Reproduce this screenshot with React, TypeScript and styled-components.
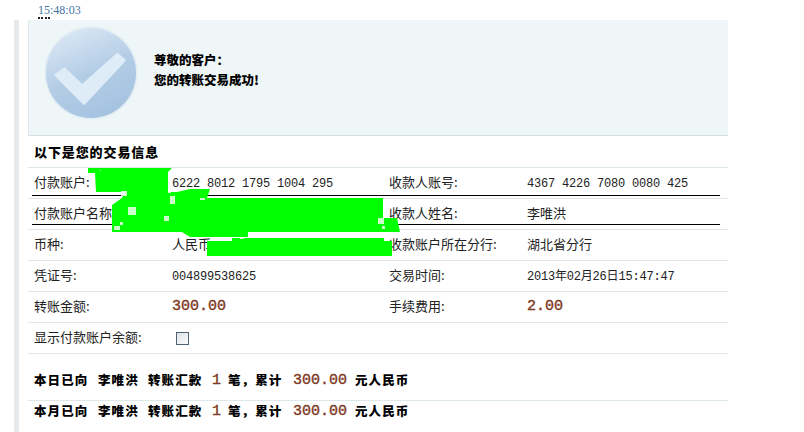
import React from "react";
import styled, { createGlobalStyle } from "styled-components";

const Global = createGlobalStyle`
  html, body { margin: 0; padding: 0; background: #fff; }
  body { font-family: "Noto Sans CJK SC", sans-serif; color: #111; }
  #root { width: 804px; height: 432px; overflow: hidden; }
`;

const Page = styled.div`
  position: relative;
  width: 804px;
  height: 432px;
  overflow: hidden;
  background: #fff;
`;

const TimeLine = styled.div`
  height: 20px;
  padding: 3px 0 0 38px;
  box-sizing: border-box;
  font: 12px/14px "Liberation Serif", serif;
  color: #44759f;
`;

const Dotted = styled.span`
  border-bottom: 2px dotted #222;
`;

const Frame = styled.div`
  margin-left: 14px;
  padding-left: 9px;
  border-left: 5px solid #e6eaec;
  height: 412px;
  width: 700px;
  display: flex;
  flex-direction: column;
`;

const Banner = styled.div`
  height: 116px;
  flex: none;
  box-sizing: border-box;
  background: #eff6f7;
  border-left: 1px solid #dfe8ea;
  border-bottom: 1px solid #d6e0e2;
  display: flex;
  align-items: center;
  padding-left: 15px;
  gap: 16px;
`;

const BadgeIcon = styled.svg`
  flex: none;
  width: 94px;
  height: 94px;
  margin-bottom: 9px;
`;

const Message = styled.div`
  font-size: 12.5px;
  line-height: 20px;
  font-weight: 900;
  color: #000;
  margin-bottom: 16px;
`;

const Title = styled.div`
  height: 32px;
  box-sizing: border-box;
  flex: none;
  padding: 5px 0 0 6px;
  font-size: 13px;
  line-height: 21px;
  font-weight: 900;
  letter-spacing: 0.9px;
  color: #000;
  border-bottom: 1px solid #dfe8e8;
`;

const Row = styled.div`
  height: 31px;
  flex: none;
  box-sizing: border-box;
  padding: 0 0 4px 6px;
  display: grid;
  grid-template-columns: 138px 217px 138px 1fr;
  align-items: center;
  border-bottom: 1px solid #dfe8e8;
`;

const Label = styled.div`
  font-size: 13px;
  color: #222;
  white-space: nowrap;
`;

const Value = styled.div`
  font-size: 13px;
  color: #222;
  white-space: nowrap;
`;

const Mono = styled.span`
  font-family: "Liberation Mono", "Noto Sans CJK SC", monospace;
  font-size: 12px;
  letter-spacing: -0.2px;
  color: #222;
`;

const Amount = styled.span`
  font-family: "Liberation Mono", monospace;
  font-size: 15px;
  font-weight: 400;
  letter-spacing: 0;
  color: #7e3a24;
  -webkit-text-stroke: 0.4px #7e3a24;
`;

const Check = styled.span`
  display: block;
  width: 11px;
  height: 11px;
  margin: 4px 0 0 4px;
  border: 1px solid #4f6478;
  background: linear-gradient(135deg, #dfe3e8, #fbfbfb);
`;

const Summary = styled.div<{ $h: number; $shift: number; $line?: boolean }>`
  height: ${(p) => p.$h}px;
  flex: none;
  box-sizing: border-box;
  padding: ${(p) => (p.$shift > 0 ? p.$shift : 0)}px 0 ${(p) => (p.$shift < 0 ? -p.$shift : 0)}px 6px;
  display: flex;
  align-items: center;
  font-size: 12.5px;
  font-weight: 900;
  color: #000;
  white-space: nowrap;
  border-bottom: ${(p) => (p.$line ? "1px solid #dfe8e8" : "none")};
`;

const Chunk = styled.span<{ $w: number }>`
  display: inline-block;
  flex: none;
  width: ${(p) => p.$w}px;
  letter-spacing: 1.1px;
`;

const Overlay = styled.svg`
  position: absolute;
  left: 0;
  top: 0;
  pointer-events: none;
`;

const Badge = () => (
  <BadgeIcon viewBox="0 0 96 96">
    <defs>
      <linearGradient id="disc" x1="0.25" y1="0" x2="0.7" y2="1">
        <stop offset="0" stopColor="#dbe8f5" />
        <stop offset="0.5" stopColor="#b4cde6" />
        <stop offset="1" stopColor="#a3c2e0" />
      </linearGradient>
    </defs>
    <circle cx="48" cy="48" r="47.5" fill="#e2ecf3" />
    <circle cx="48" cy="48" r="46" fill="url(#disc)" />
    <polygon
      points="12,50 21,44 39,61 75,29 82,35 41,79"
      fill="#deecf8"
      stroke="#deecf8"
      strokeWidth="3"
      strokeLinejoin="round"
    />
  </BadgeIcon>
);

const TotalLine = ({ period }: { period: string }) => (
  <>
    <Chunk $w={64}>{period}已向</Chunk>
    <Chunk $w={50}>李唯洪</Chunk>
    <Chunk $w={64}>转账汇款</Chunk>
    <Chunk $w={16}><Amount>1</Amount></Chunk>
    <Chunk $w={65}>笔，累计</Chunk>
    <Chunk $w={62}><Amount>300.00</Amount></Chunk>
    <Chunk $w={70}>元人民币</Chunk>
  </>
);

const specks = [
  [128, 207, 8, 8], [114, 226, 6, 4], [120, 222, 3, 3], [170, 196, 5, 8], [164, 216, 5, 5],
  [378, 218, 6, 6], [382, 226, 3, 3], [121, 191, 6, 5], [172, 232, 6, 5], [168, 190, 3, 3],
  [200, 198, 5, 2], [240, 237, 4, 2], [100, 170, 1, 1],
];

export default function App() {
  return (
    <Page>
      <Global />
      <TimeLine><Dotted>15</Dotted>:48:03</TimeLine>
      <Frame>
        <Banner>
          <Badge />
          <Message>
            <div>尊敬的客户：</div>
            <div>您的转账交易成功!</div>
          </Message>
        </Banner>
        <Title>以下是您的交易信息</Title>
        <Row>
          <Label>付款账户:</Label>
          <Value><Mono>6222 8012 1795 1004 295</Mono></Value>
          <Label>收款人账号:</Label>
          <Value><Mono>4367 4226 7080 0080 425</Mono></Value>
        </Row>
        <Row>
          <Label>付款账户名称:</Label>
          <Value></Value>
          <Label>收款人姓名:</Label>
          <Value>李唯洪</Value>
        </Row>
        <Row>
          <Label>币种:</Label>
          <Value>人民币</Value>
          <Label>收款账户所在分行:</Label>
          <Value>湖北省分行</Value>
        </Row>
        <Row>
          <Label>凭证号:</Label>
          <Value><Mono>004899538625</Mono></Value>
          <Label>交易时间:</Label>
          <Value><Mono>2013年02月26日15:47:47</Mono></Value>
        </Row>
        <Row>
          <Label>转账金额:</Label>
          <Value><Amount>300.00</Amount></Value>
          <Label>手续费用:</Label>
          <Value><Amount>2.00</Amount></Value>
        </Row>
        <Row>
          <Label>显示付款账户余额:</Label>
          <Value><Check /></Value>
        </Row>
        <Summary $h={47} $shift={4} $line><TotalLine period="本日" /></Summary>
        <Summary $h={22} $shift={-4}><TotalLine period="本月" /></Summary>
      </Frame>
      <Overlay width="804" height="432" viewBox="0 0 804 432">
        <line x1="32" y1="195.5" x2="720" y2="195.5" stroke="#000" strokeWidth="1" />
        <line x1="32" y1="224.5" x2="720" y2="224.5" stroke="#000" strokeWidth="1" />
        <path
          fill="#00ff00"
          d="M88 168H172L168 172V192L177 192L190 189H210L207 198H383V218H397L400 232H248V237H190L182 232H112V205L122 198L126 191L127 192H96L95 173L88 173Z"
        />
        <path fill="#00ff00" d="M207 241H232V238H384V241H392V256H207Z" />
        {specks.map(([x, y, w, h], i) => (
          <rect key={i} x={x} y={y} width={w} height={h} fill="#fff" opacity="0.8" />
        ))}
      </Overlay>
    </Page>
  );
}
